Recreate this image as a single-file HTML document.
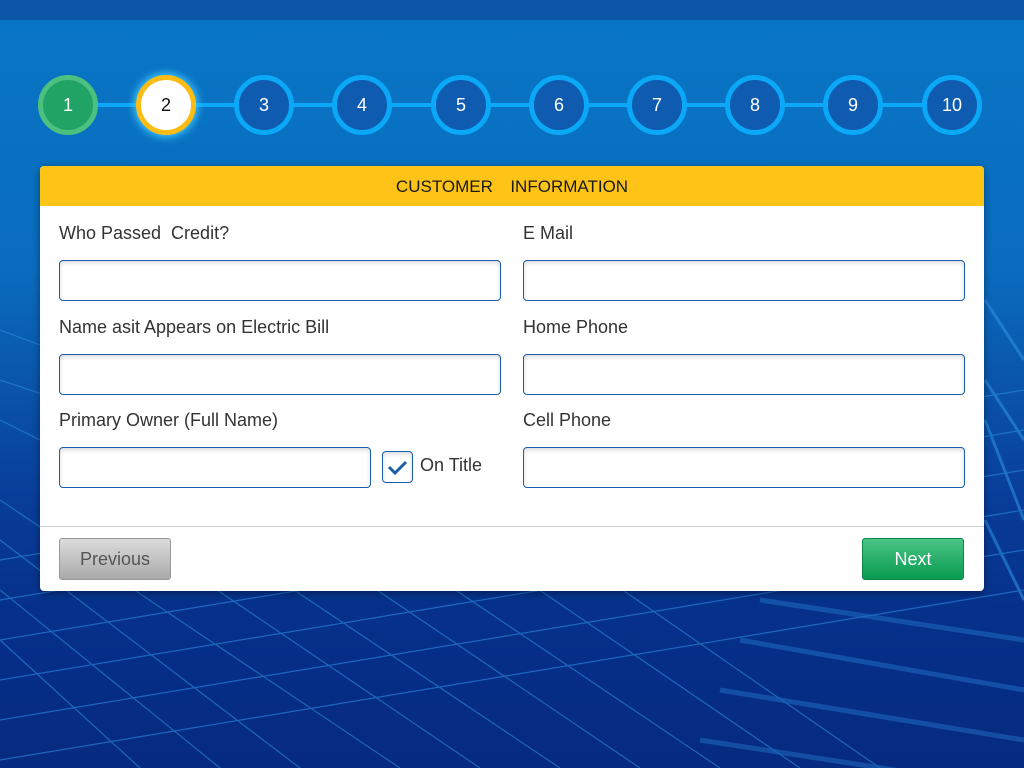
<!DOCTYPE html>
<html><head><style>
*{margin:0;padding:0;box-sizing:border-box}
body{width:1024px;height:768px;overflow:hidden;position:relative;font-family:"Liberation Sans",sans-serif;background:linear-gradient(180deg,#0876c4 0%,#0a6cbf 35%,#0a55aa 50%,#083d98 65%,#06308a 80%,#062a80 100%)}
.top{position:absolute;left:0;top:0;width:1024px;height:20px;background:#0b56a8}
.bg{position:absolute;left:0;top:0}
.line{position:absolute;top:103px;height:4px;background:#0aa8f6}
.c{position:absolute;top:75px;width:60px;height:60px;border-radius:50%;border:5px solid #0aa8f6;background:#0f5bb0;color:#fff;font-size:18px;text-align:center;line-height:50px}
.card{position:absolute;left:40px;top:166px;width:944px;height:425px;background:#fff;border-radius:4px;box-shadow:0 2px 8px rgba(0,0,0,.4);overflow:hidden}
.hd{height:40px;background:#fdc316;text-align:center;font-size:17px;line-height:41px;color:#1a1a1a;word-spacing:4px}
.lb{position:absolute;font-size:18px;color:#333}
.in{position:absolute;height:41px;border:1px solid #1a5eb0;border-radius:4px;box-shadow:inset 0 2px 4px rgba(0,0,0,.15)}
.sep{position:absolute;left:0;top:360px;width:944px;height:1px;background:#d0d0d0}
.btn{position:absolute;top:372px;height:42px;border-radius:3px;font-size:18px;text-align:center;line-height:41px}
</style></head><body>
<svg class="bg" width="1024" height="768">
<g stroke="#2b8ee0" stroke-width="1.2" opacity=".6" fill="none">
<path d="M0 560 L1024 390 M0 600 L1024 430 M0 640 L1024 470 M0 680 L1024 510 M0 720 L1024 550 M0 760 L1024 590"/>
<path d="M0 330 L80 360 M0 380 L120 420 M0 420 L40 440"/>
<path d="M0 500 L400 768 M40 470 L480 768 M100 460 L560 768 M170 450 L640 768 M240 445 L720 768 M320 440 L800 768 M400 436 L880 768 M0 540 L300 768 M0 590 L220 768 M0 640 L140 768"/>
<path d="M760 600 L1024 640 M740 640 L1024 690 M720 690 L1024 740 M700 740 L1024 790" stroke-width="5" opacity=".6"/>
<path d="M985 300 L1024 360 M985 380 L1024 440 M985 420 L1024 520 M985 520 L1024 600" stroke-width="3"/>
</g>
</svg>
<div class="top"></div>
<div class="line" style="left:95px;width:860px"></div>
<div class="c" style="left:38px;background:#22a366;border-color:#4cc07e">1</div>
<div class="c" style="left:136px;background:#fff;border-color:#fcbc14;color:#111;box-shadow:0 0 8px 2px #41c8ff">2</div>
<div class="c" style="left:234px">3</div>
<div class="c" style="left:332px">4</div>
<div class="c" style="left:431px">5</div>
<div class="c" style="left:529px">6</div>
<div class="c" style="left:627px">7</div>
<div class="c" style="left:725px">8</div>
<div class="c" style="left:823px">9</div>
<div class="c" style="left:922px">10</div>
<div class="card">
<div class="hd">CUSTOMER &nbsp;INFORMATION</div>
<div class="lb" style="left:19px;top:57px">Who Passed &nbsp;Credit?</div>
<div class="lb" style="left:483px;top:57px">E Mail</div>
<div class="in" style="left:19px;top:94px;width:442px"></div>
<div class="in" style="left:483px;top:94px;width:442px"></div>
<div class="lb" style="left:19px;top:151px">Name asit Appears on Electric Bill</div>
<div class="lb" style="left:483px;top:151px">Home Phone</div>
<div class="in" style="left:19px;top:188px;width:442px"></div>
<div class="in" style="left:483px;top:188px;width:442px"></div>
<div class="lb" style="left:19px;top:244px">Primary Owner (Full Name)</div>
<div class="lb" style="left:483px;top:244px">Cell Phone</div>
<div class="in" style="left:19px;top:281px;width:312px"></div>
<div class="in" style="left:342px;top:285px;width:31px;height:32px;border-radius:4px"><svg width="29" height="30"><path d="M6 15 L12 21 L23 10" stroke="#1f5fa8" stroke-width="3" fill="none"/></svg></div>
<div class="lb" style="left:380px;top:289px">On Title</div>
<div class="in" style="left:483px;top:281px;width:442px"></div>
<div class="sep"></div>
<div class="btn" style="left:19px;width:112px;background:linear-gradient(#dcdcdc,#a9a9a9);border:1px solid #999;color:#555">Previous</div>
<div class="btn" style="left:822px;width:102px;background:linear-gradient(#4cc485,#079a4f);border:1px solid #0a8a48;color:#fff">Next</div>
</div>
</body></html>
